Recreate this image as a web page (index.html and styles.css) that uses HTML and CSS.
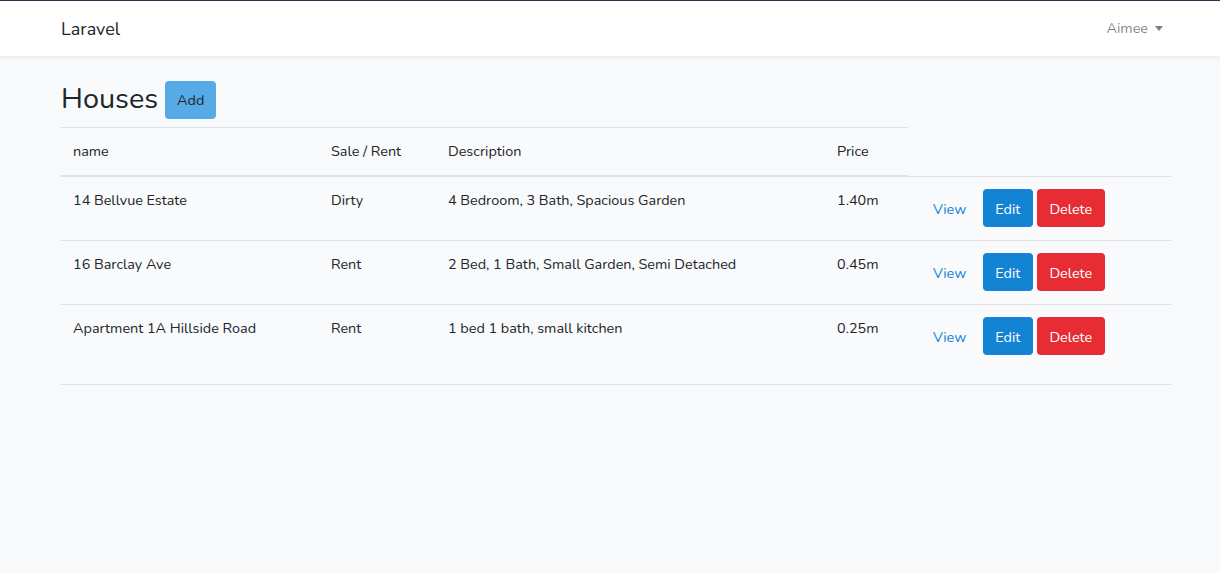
FILE: index.html
```html
<!DOCTYPE html>
<html lang="en">
<head>
<meta charset="utf-8">
<title>Laravel</title>
<link rel="stylesheet" href="styles.css">
</head>
<body>
<div class="app">
  <nav class="navbar">
    <div class="container nav-inner">
      <a class="brand" href="#">Laravel</a>
      <a class="user" href="#">Aimee <span class="caret"></span></a>
    </div>
  </nav>
  <main class="main">
    <div class="container">
      <div class="title-row">
        <h1 class="title">Houses</h1>
        <a class="btn btn-info" href="#">Add</a>
      </div>
      <table class="table">
        <thead>
          <tr>
            <th class="c-name">name</th>
            <th class="c-type">Sale / Rent</th>
            <th class="c-desc">Description</th>
            <th class="c-price">Price</th>
          </tr>
        </thead>
        <tbody>
          <tr>
            <td>14 Bellvue Estate</td>
            <td>Dirty</td>
            <td>4 Bedroom, 3 Bath, Spacious Garden</td>
            <td>1.40m</td>
            <td class="actions"><div class="act"><a class="btn btn-link" href="#">View</a><a class="btn btn-primary" href="#">Edit</a><button class="btn btn-danger">Delete</button></div></td>
          </tr>
          <tr>
            <td>16 Barclay Ave</td>
            <td>Rent</td>
            <td>2 Bed, 1 Bath, Small Garden, Semi Detached</td>
            <td>0.45m</td>
            <td class="actions"><div class="act"><a class="btn btn-link" href="#">View</a><a class="btn btn-primary" href="#">Edit</a><button class="btn btn-danger">Delete</button></div></td>
          </tr>
          <tr class="last">
            <td>Apartment 1A Hillside Road</td>
            <td>Rent</td>
            <td>1 bed 1 bath, small kitchen</td>
            <td>0.25m</td>
            <td class="actions"><div class="act"><a class="btn btn-link" href="#">View</a><a class="btn btn-primary" href="#">Edit</a><button class="btn btn-danger">Delete</button></div></td>
          </tr>
        </tbody>
      </table>
    </div>
  </main>
</div>
</body>
</html>
```
FILE: styles.css
```css
* { box-sizing: border-box; }
html, body { margin: 0; padding: 0; }
body {
  font-family: "Nunito", "Lato", "Noto Sans", sans-serif;
  font-size: 14.4px;
  line-height: 1.6;
  color: #212529;
  background: #f8fafc;
  border-top: 1px solid #3b2a4c;
  height: 573px;
}
a { text-decoration: none; }
.container {
  width: 1140px;
  margin: 0 auto;
  padding: 0 9px 0 21px;
}
.navbar {
  background: #fff;
  box-shadow: 0 2px 4px rgba(0,0,0,0.075);
  height: 55px;
  display: flex;
  align-items: center;
}
.nav-inner {
  display: flex;
  justify-content: space-between;
  align-items: center;
}
.brand {
  font-size: 18px;
  color: #212529;
  padding: 5px 0;
  margin-top: 1px;
}
.user {
  color: rgba(0,0,0,0.5);
  padding: 8px;
  margin-top: 1px;
  display: flex;
  align-items: center;
}
.caret {
  display: inline-block;
  margin-left: 7px;
  width: 0; height: 0;
  border-top: 5px solid rgba(0,0,0,0.5);
  border-left: 4.5px solid transparent;
  border-right: 4.5px solid transparent;
}
.main { padding-top: 24px; }
.title-row {
  display: flex;
  align-items: center;
  gap: 7px;
  height: 40px;
  margin-bottom: 7px;
}
.title {
  margin: 0;
  font-weight: 400;
  font-size: 28.8px;
  line-height: 1.2;
  margin-top: -2px;
}
.btn {
  display: inline-block;
  font: inherit;
  font-size: 14.4px;
  line-height: 1.6;
  padding: 6px 12px;
  border: 1px solid transparent;
  border-radius: 4px;
  cursor: pointer;
  height: 38px;
}
.btn-info { background: #56aae6; color: #212529; padding: 7px 11px 5px; }
.btn-primary { background: #1384d3; color: #fff; }
.btn-danger { background: #e82c33; color: #fff; }
.btn-link { color: #1384d3; background: transparent; }
.table {
  width: 100%;
  border-collapse: collapse;
}
.table th, .table td {
  padding: 12px;
  text-align: left;
  vertical-align: top;
  font-weight: 400;
  border-top: 1px solid #dee2e6;
}
.table th {
  border-bottom: 2px solid #dee2e6;
  padding: 12px;
}
.c-name { width: 258px; }
.c-type { width: 117px; }
.c-desc { width: 389px; }
.c-price { width: 83px; }
.table td { height: 64px; }
.table tr.last td { height: 80px; border-bottom: 1px solid #dee2e6; }
.actions { padding: 12px 0 0 12px !important; }
.act { display: flex; gap: 4px; }
.act .btn { padding: 8px 11.5px 4px; }
.act .btn-link { margin-right: 0; padding-left: 12px; }
```
